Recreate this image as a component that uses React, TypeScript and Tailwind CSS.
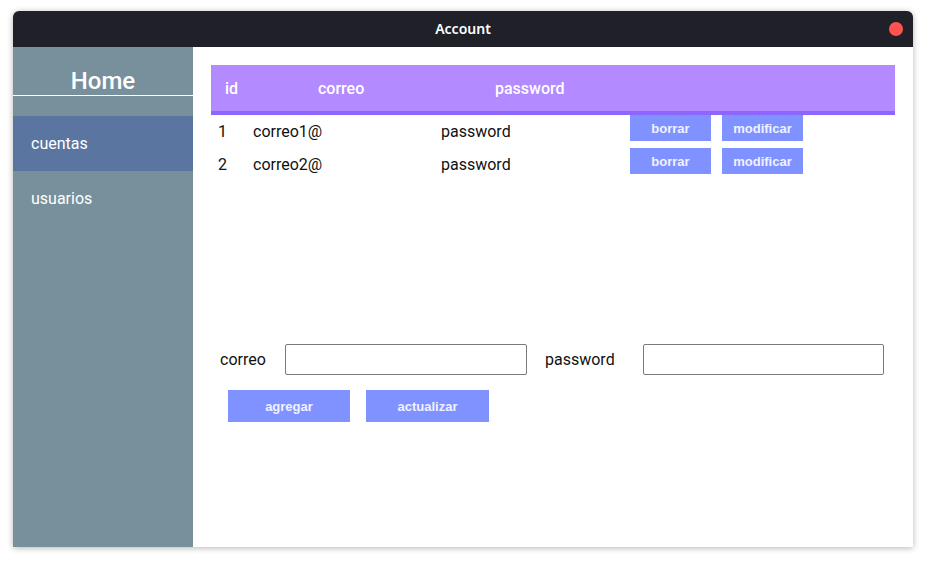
import React from 'react';

const rows = [
  { id: 1, correo: 'correo1@', password: 'password' },
  { id: 2, correo: 'correo2@', password: 'password' },
];

const btn =
  "bg-[#7f92ff] text-[#f0f2ff] text-[13px] font-bold font-['Liberation_Sans',Arial,sans-serif] flex items-center justify-center pt-[1px]";

const App: React.FC = () => {
  return (
    <div className="w-[926px] h-[562px] bg-white pl-[13px] pt-[11px] font-['Roboto',sans-serif]">
      <div className="w-[900px] h-[536px] flex flex-col rounded-t-[6px] overflow-hidden shadow-[0_1px_6px_rgba(0,0,0,0.3)]">
        {/* title bar */}
        <div className="relative h-[36px] bg-[#202028] flex items-center justify-center pb-[2px]">
          <span className="text-white text-[14px] font-semibold font-['Noto_Sans',sans-serif]">Account</span>
          <div className="absolute right-[10px] top-[11px] w-[14px] h-[14px] rounded-full bg-[#ff5350]" />
        </div>

        <div className="flex flex-1">
          {/* sidebar */}
          <div className="w-[180px] bg-[#78909c] flex flex-col">
            <div className="h-[49px] border-b border-white flex items-end justify-center">
              <span className="text-white text-[24px] leading-[28px] font-medium">Home</span>
            </div>
            <div className="mt-[20px] h-[55px] bg-[#5a75a0] flex items-center pl-[18px] text-white text-[16px]">
              cuentas
            </div>
            <div className="h-[55px] flex items-center pl-[18px] text-white text-[16px]">
              usuarios
            </div>
          </div>

          {/* content */}
          <div className="flex-1 bg-white pt-[18px] px-[18px]">
            <div className="h-[50px] bg-[#b38aff] border-b-[4px] border-[#8c66ff] flex items-center pt-[2px] text-white text-[16px] font-medium">
              <span className="w-[107px] pl-[14px]">id</span>
              <span className="w-[177px]">correo</span>
              <span>password</span>
            </div>

            {rows.map((r) => (
              <div key={r.id} className="h-[33px] flex items-start text-[16px] text-[#111]">
                <span className="w-[42px] pl-[7px] leading-[33px]">{r.id}</span>
                <span className="w-[188px] leading-[33px]">{r.correo}</span>
                <span className="w-[189px] leading-[33px]">{r.password}</span>
                <div className={`${btn} w-[81px] h-[26px]`}>borrar</div>
                <div className={`${btn} w-[81px] h-[26px] ml-[11px]`}>modificar</div>
              </div>
            ))}

            <div className="mt-[163px] flex items-center text-[16px] text-[#111]">
              <span className="w-[74px] pl-[9px]">correo</span>
              <input className="w-[242px] h-[31px] border border-[#7a7a7a] rounded-[2px] outline-none" />
              <span className="w-[116px] pl-[18px]">password</span>
              <input className="w-[241px] h-[31px] border border-[#7a7a7a] rounded-[2px] outline-none" />
            </div>

            <div className="mt-[15px] flex gap-[16px] pl-[17px]">
              <div className={`${btn} w-[122px] h-[32px]`}>agregar</div>
              <div className={`${btn} w-[123px] h-[32px]`}>actualizar</div>
            </div>
          </div>
        </div>
      </div>
    </div>
  );
};

export default App;
